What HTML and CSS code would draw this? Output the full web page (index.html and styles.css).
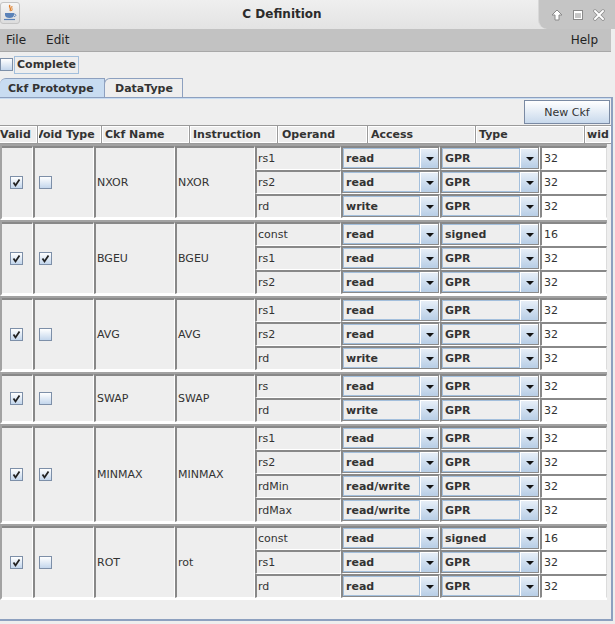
FILE: index.html
```html
<!DOCTYPE html>
<html>
<head>
<meta charset="utf-8">
<title>C Definition</title>
<link rel="stylesheet" href="styles.css">
</head>
<body>
<div class="window">
  <div class="titlebar">
    <div class="app-icon">
      <svg width="18" height="20" viewBox="0 0 18 20">
        <path d="M9 2 C7 4 11 5 9 8" fill="none" stroke="#e07a20" stroke-width="1.4"/>
        <path d="M11 3 C10 5 12 6 10.5 8" fill="none" stroke="#e07a20" stroke-width="1"/>
        <path d="M4 10 H13 V12 C13 14 11 15 8.5 15 C6 15 4 14 4 12 Z" fill="#5a82b8"/>
        <path d="M13 11 C15.5 11 15.5 13.5 13 13.5" fill="none" stroke="#5a82b8" stroke-width="1"/>
        <path d="M3 16.5 H14" stroke="#5a82b8" stroke-width="1.2"/>
      </svg>
    </div>
    <div class="title">C Definition</div>
    <div class="controls">
      <svg width="12" height="12" viewBox="0 0 12 12"><path d="M6 1 L11 6 H8 V11 H4 V6 H1 Z" fill="#fff" stroke="#8a8a8a" stroke-width="1"/></svg>
      <svg width="12" height="12" viewBox="0 0 12 12"><rect x="1.5" y="1.5" width="9" height="9" fill="none" stroke="#8a8a8a" stroke-width="1"/><rect x="2.5" y="2.5" width="7" height="7" fill="none" stroke="#fff" stroke-width="1"/><rect x="2.5" y="2.5" width="7" height="1.6" fill="#fff"/></svg>
      <svg width="12" height="12" viewBox="0 0 12 12"><path d="M2 2 L10 10 M10 2 L2 10" stroke="#8a8a8a" stroke-width="3.4" stroke-linecap="round"/><path d="M2 2 L10 10 M10 2 L2 10" stroke="#fff" stroke-width="2" stroke-linecap="round"/></svg>
    </div>
  </div>

  <div class="menubar">
    <span class="menu">File</span>
    <span class="menu">Edit</span>
    <span class="menu-spacer"></span>
    <span class="menu">Help</span>
  </div>

  <div class="main">
    <div class="complete-row">
      <span class="cb"></span>
      <span class="complete-label">Complete</span>
    </div>

    <div class="tabs">
      <div class="tab selected">Ckf Prototype</div>
      <div class="tab">DataType</div>
    </div>

    <div class="panel">
      <div class="toolbar"><button class="btn">New Ckf</button></div>

      <div class="thead">
        <div class="th h-valid">Valid</div>
        <div class="th h-void"><span class="clip">Void Type</span></div>
        <div class="th h-name">Ckf Name</div>
        <div class="th h-instr">Instruction</div>
        <div class="th h-op">Operand</div>
        <div class="th h-acc">Access</div>
        <div class="th h-type">Type</div>
        <div class="th h-wid">wid</div>
      </div>

      <div class="tbody">
        <!-- NXOR -->
        <div class="group">
          <div class="cell c-valid"><span class="cb on"><svg width="11" height="11" viewBox="0 0 11 11"><path d="M2.5 5.5 L4.5 8.5 L8.5 2.5" fill="none" stroke="#222" stroke-width="1.8"/></svg></span></div>
          <div class="cell c-void"><span class="cb"></span></div>
          <div class="cell c-name">NXOR</div>
          <div class="cell c-instr">NXOR</div>
          <div class="ops">
            <div class="op-row"><div class="sc c-op">rs1</div><div class="sc c-acc"><div class="combo"><span class="combo-val">read</span><span class="combo-btn"><i></i></span></div></div><div class="sc c-type"><div class="combo"><span class="combo-val">GPR</span><span class="combo-btn"><i></i></span></div></div><div class="sc c-wid">32</div></div>
            <div class="op-row"><div class="sc c-op">rs2</div><div class="sc c-acc"><div class="combo"><span class="combo-val">read</span><span class="combo-btn"><i></i></span></div></div><div class="sc c-type"><div class="combo"><span class="combo-val">GPR</span><span class="combo-btn"><i></i></span></div></div><div class="sc c-wid">32</div></div>
            <div class="op-row"><div class="sc c-op">rd</div><div class="sc c-acc"><div class="combo"><span class="combo-val">write</span><span class="combo-btn"><i></i></span></div></div><div class="sc c-type"><div class="combo"><span class="combo-val">GPR</span><span class="combo-btn"><i></i></span></div></div><div class="sc c-wid">32</div></div>
          </div>
        </div>
        <!-- BGEU -->
        <div class="group">
          <div class="cell c-valid"><span class="cb on"><svg width="11" height="11" viewBox="0 0 11 11"><path d="M2.5 5.5 L4.5 8.5 L8.5 2.5" fill="none" stroke="#222" stroke-width="1.8"/></svg></span></div>
          <div class="cell c-void"><span class="cb on"><svg width="11" height="11" viewBox="0 0 11 11"><path d="M2.5 5.5 L4.5 8.5 L8.5 2.5" fill="none" stroke="#222" stroke-width="1.8"/></svg></span></div>
          <div class="cell c-name">BGEU</div>
          <div class="cell c-instr">BGEU</div>
          <div class="ops">
            <div class="op-row"><div class="sc c-op">const</div><div class="sc c-acc"><div class="combo"><span class="combo-val">read</span><span class="combo-btn"><i></i></span></div></div><div class="sc c-type"><div class="combo"><span class="combo-val">signed</span><span class="combo-btn"><i></i></span></div></div><div class="sc c-wid">16</div></div>
            <div class="op-row"><div class="sc c-op">rs1</div><div class="sc c-acc"><div class="combo"><span class="combo-val">read</span><span class="combo-btn"><i></i></span></div></div><div class="sc c-type"><div class="combo"><span class="combo-val">GPR</span><span class="combo-btn"><i></i></span></div></div><div class="sc c-wid">32</div></div>
            <div class="op-row"><div class="sc c-op">rs2</div><div class="sc c-acc"><div class="combo"><span class="combo-val">read</span><span class="combo-btn"><i></i></span></div></div><div class="sc c-type"><div class="combo"><span class="combo-val">GPR</span><span class="combo-btn"><i></i></span></div></div><div class="sc c-wid">32</div></div>
          </div>
        </div>
        <!-- AVG -->
        <div class="group">
          <div class="cell c-valid"><span class="cb on"><svg width="11" height="11" viewBox="0 0 11 11"><path d="M2.5 5.5 L4.5 8.5 L8.5 2.5" fill="none" stroke="#222" stroke-width="1.8"/></svg></span></div>
          <div class="cell c-void"><span class="cb"></span></div>
          <div class="cell c-name">AVG</div>
          <div class="cell c-instr">AVG</div>
          <div class="ops">
            <div class="op-row"><div class="sc c-op">rs1</div><div class="sc c-acc"><div class="combo"><span class="combo-val">read</span><span class="combo-btn"><i></i></span></div></div><div class="sc c-type"><div class="combo"><span class="combo-val">GPR</span><span class="combo-btn"><i></i></span></div></div><div class="sc c-wid">32</div></div>
            <div class="op-row"><div class="sc c-op">rs2</div><div class="sc c-acc"><div class="combo"><span class="combo-val">read</span><span class="combo-btn"><i></i></span></div></div><div class="sc c-type"><div class="combo"><span class="combo-val">GPR</span><span class="combo-btn"><i></i></span></div></div><div class="sc c-wid">32</div></div>
            <div class="op-row"><div class="sc c-op">rd</div><div class="sc c-acc"><div class="combo"><span class="combo-val">write</span><span class="combo-btn"><i></i></span></div></div><div class="sc c-type"><div class="combo"><span class="combo-val">GPR</span><span class="combo-btn"><i></i></span></div></div><div class="sc c-wid">32</div></div>
          </div>
        </div>
        <!-- SWAP -->
        <div class="group">
          <div class="cell c-valid"><span class="cb on"><svg width="11" height="11" viewBox="0 0 11 11"><path d="M2.5 5.5 L4.5 8.5 L8.5 2.5" fill="none" stroke="#222" stroke-width="1.8"/></svg></span></div>
          <div class="cell c-void"><span class="cb"></span></div>
          <div class="cell c-name">SWAP</div>
          <div class="cell c-instr">SWAP</div>
          <div class="ops">
            <div class="op-row"><div class="sc c-op">rs</div><div class="sc c-acc"><div class="combo"><span class="combo-val">read</span><span class="combo-btn"><i></i></span></div></div><div class="sc c-type"><div class="combo"><span class="combo-val">GPR</span><span class="combo-btn"><i></i></span></div></div><div class="sc c-wid">32</div></div>
            <div class="op-row"><div class="sc c-op">rd</div><div class="sc c-acc"><div class="combo"><span class="combo-val">write</span><span class="combo-btn"><i></i></span></div></div><div class="sc c-type"><div class="combo"><span class="combo-val">GPR</span><span class="combo-btn"><i></i></span></div></div><div class="sc c-wid">32</div></div>
          </div>
        </div>
        <!-- MINMAX -->
        <div class="group">
          <div class="cell c-valid"><span class="cb on"><svg width="11" height="11" viewBox="0 0 11 11"><path d="M2.5 5.5 L4.5 8.5 L8.5 2.5" fill="none" stroke="#222" stroke-width="1.8"/></svg></span></div>
          <div class="cell c-void"><span class="cb on"><svg width="11" height="11" viewBox="0 0 11 11"><path d="M2.5 5.5 L4.5 8.5 L8.5 2.5" fill="none" stroke="#222" stroke-width="1.8"/></svg></span></div>
          <div class="cell c-name">MINMAX</div>
          <div class="cell c-instr">MINMAX</div>
          <div class="ops">
            <div class="op-row"><div class="sc c-op">rs1</div><div class="sc c-acc"><div class="combo"><span class="combo-val">read</span><span class="combo-btn"><i></i></span></div></div><div class="sc c-type"><div class="combo"><span class="combo-val">GPR</span><span class="combo-btn"><i></i></span></div></div><div class="sc c-wid">32</div></div>
            <div class="op-row"><div class="sc c-op">rs2</div><div class="sc c-acc"><div class="combo"><span class="combo-val">read</span><span class="combo-btn"><i></i></span></div></div><div class="sc c-type"><div class="combo"><span class="combo-val">GPR</span><span class="combo-btn"><i></i></span></div></div><div class="sc c-wid">32</div></div>
            <div class="op-row"><div class="sc c-op">rdMin</div><div class="sc c-acc"><div class="combo"><span class="combo-val">read/write</span><span class="combo-btn"><i></i></span></div></div><div class="sc c-type"><div class="combo"><span class="combo-val">GPR</span><span class="combo-btn"><i></i></span></div></div><div class="sc c-wid">32</div></div>
            <div class="op-row"><div class="sc c-op">rdMax</div><div class="sc c-acc"><div class="combo"><span class="combo-val">read/write</span><span class="combo-btn"><i></i></span></div></div><div class="sc c-type"><div class="combo"><span class="combo-val">GPR</span><span class="combo-btn"><i></i></span></div></div><div class="sc c-wid">32</div></div>
          </div>
        </div>
        <!-- ROT -->
        <div class="group">
          <div class="cell c-valid"><span class="cb on"><svg width="11" height="11" viewBox="0 0 11 11"><path d="M2.5 5.5 L4.5 8.5 L8.5 2.5" fill="none" stroke="#222" stroke-width="1.8"/></svg></span></div>
          <div class="cell c-void"><span class="cb"></span></div>
          <div class="cell c-name">ROT</div>
          <div class="cell c-instr">rot</div>
          <div class="ops">
            <div class="op-row"><div class="sc c-op">const</div><div class="sc c-acc"><div class="combo"><span class="combo-val">read</span><span class="combo-btn"><i></i></span></div></div><div class="sc c-type"><div class="combo"><span class="combo-val">signed</span><span class="combo-btn"><i></i></span></div></div><div class="sc c-wid">16</div></div>
            <div class="op-row"><div class="sc c-op">rs1</div><div class="sc c-acc"><div class="combo"><span class="combo-val">read</span><span class="combo-btn"><i></i></span></div></div><div class="sc c-type"><div class="combo"><span class="combo-val">GPR</span><span class="combo-btn"><i></i></span></div></div><div class="sc c-wid">32</div></div>
            <div class="op-row"><div class="sc c-op">rd</div><div class="sc c-acc"><div class="combo"><span class="combo-val">read</span><span class="combo-btn"><i></i></span></div></div><div class="sc c-type"><div class="combo"><span class="combo-val">GPR</span><span class="combo-btn"><i></i></span></div></div><div class="sc c-wid">32</div></div>
          </div>
        </div>
      </div>
    </div>
  </div>
</div>
</body>
</html>
```

FILE: styles.css
```css
* { box-sizing: border-box; }
html, body { margin: 0; padding: 0; }
body {
  width: 615px;
  height: 624px;
  overflow: hidden;
  background: #eeeeee;
  font-family: "DejaVu Sans", "Liberation Sans", sans-serif;
  font-size: 11px;
  color: #333333;
}
.window {
  width: 615px;
  height: 624px;
  display: flex;
  flex-direction: column;
}

/* title bar */
.titlebar {
  height: 29px;
  flex: none;
  display: flex;
  align-items: stretch;
  background: linear-gradient(#efefef, #e3e3e3);
}
.app-icon {
  width: 20px;
  height: 22px;
  margin-top: 2px;
  border: 1px solid #c4c4c4;
  border-radius: 3px;
  background: linear-gradient(#f6f6f6, #dcdcdc);
  display: flex;
  align-items: center;
  justify-content: center;
}
.title {
  flex: 1;
  text-align: center;
  font-weight: bold;
  font-size: 12px;
  color: #2b2b2b;
  line-height: 29px;
  padding-left: 6px;
}
.controls {
  width: 77px;
  display: flex;
  align-items: center;
  justify-content: space-around;
  padding: 0 6px 0 8px;
  background: #c5c5c5;
  border-left: 1px solid #d8d8d8;
  border-bottom-left-radius: 9px;
}

/* menu bar */
.menubar {
  height: 23px;
  flex: none;
  display: flex;
  align-items: center;
  background: #c2c2c2;
  border-bottom: 1px solid #a8a8a8;
  margin-right: 4px;
  font-size: 12px;
  color: #222;
}
.menu { padding: 0 6px; }
.menu + .menu { margin-left: 8px; }
.menu-spacer { flex: 1; }
.menubar .menu:last-child { padding-right: 13px; }

.main {
  flex: 1;
  display: flex;
  flex-direction: column;
  margin-right: 2px;
}

/* complete */
.complete-row {
  height: 25px;
  flex: none;
  display: flex;
  align-items: center;
  gap: 1px;
}
.complete-label {
  font-weight: bold;
  border: 1px solid #a3bfdc;
  padding: 1px 2px;
  line-height: 14px;
}

/* checkbox */
.cb {
  width: 13px;
  height: 13px;
  display: inline-flex;
  align-items: center;
  justify-content: center;
  border: 1px solid #7d8fa8;
  background: linear-gradient(#ffffff, #c3d6ec);
  flex: none;
}
.cb svg { display: block; }

/* tabs */
.tabs {
  height: 19px;
  flex: none;
  margin-top: 1px;
  display: flex;
  align-items: flex-end;
}
.tab {
  height: 19px;
  padding: 0 9px 0 10px;
  display: flex;
  align-items: center;
  font-weight: bold;
  border: 1px solid #8da0bf;
  border-bottom: none;
  border-top-left-radius: 6px;
  background: #eeeeee;
}
.tab.selected {
  width: 105px;
  padding-left: 8px;
  background: #c8dcf1;
  border-left: none;
}
.tab + .tab { width: 79px; padding-left: 10px; margin-left: -1px; }

/* panel */
.panel {
  flex: 1;
  display: flex;
  flex-direction: column;
  border-top: 1px solid #8da0bf;
  box-shadow: inset 0 1px 0 #c8dcf1;
  border-right: 2px solid #8da0bf;
  border-bottom: 2px solid #8da0bf;
  margin-bottom: 3px;
}
.toolbar {
  display: flex;
  justify-content: flex-end;
  padding: 2px 1px 1px 0;
}
.btn {
  width: 86px;
  height: 24px;
  font-family: inherit;
  font-size: 11px;
  color: #333;
  border: 1px solid #7a8aa3;
  background: linear-gradient(#ffffff, #c8d9ec);
  padding: 0;
}

/* table header */
.thead {
  height: 19px;
  display: flex;
  gap: 1px;
  padding: 1px 0;
  background: #9a9a9a;
}
.th {
  flex: none;
  font-weight: bold;
  line-height: 15px;
  padding-left: 1px;
  overflow: hidden;
  white-space: nowrap;
  background: #eeeeee;
  border: 1px solid #ffffff;
}
.h-valid { width: 37px; padding-left: 0; border-left: none; }
.h-void { width: 63px; padding-left: 0; }
.h-void .clip { display: inline-block; margin-left: -4px; }
.h-name { width: 87px; padding-left: 2px; }
.h-instr { width: 87px; padding-left: 2px; }
.h-op { width: 89px; padding-left: 3px; }
.h-acc { width: 107px; padding-left: 2px; }
.h-type { width: 108px; padding-left: 2px; }
.h-wid { flex: 1; }

/* table body */
.tbody {
  display: flex;
  flex-direction: column;
}
.group {
  display: flex;
  width: 607px;
  border-top: 2px solid #a2a2a2;
  border-left: 2px solid #a2a2a2;
  border-bottom: 2px solid #ffffff;
}
.cell, .sc {
  flex: none;
  display: flex;
  align-items: center;
  border-left: 2px solid #888888;
  border-top: 2px solid #888888;
  border-right: 1px solid #ffffff;
  border-bottom: 1px solid #ffffff;
  color: #333;
  white-space: nowrap;
  overflow: hidden;
}
.c-valid { width: 31px; justify-content: center; border-left: none; padding-right: 1px; }
.c-void { width: 61px; padding-left: 4px; }
.c-name { width: 81px; padding-left: 1px; }
.c-instr { width: 80px; padding-left: 1px; }
.ops { display: flex; flex-direction: column; }
.op-row { display: flex; height: 24px; }
.c-op { width: 86px; padding-left: 1px; }
.c-acc { width: 99px; }
.c-type { width: 100px; }
.c-wid { width: 67px; background: #ffffff; padding-left: 2px; border-right: 1px solid #dcdcdc; }

/* combo */
.combo {
  flex: 1;
  height: 100%;
  display: flex;
  border-right: 1px solid #8a8a8a;
  border-bottom: 1px solid #8a8a8a;
}
.combo-val {
  flex: 1;
  display: flex;
  align-items: center;
  padding-left: 2px;
  font-weight: bold;
  background: #eeeeee;
  border: 1px solid #a3bfdc;
}
.combo-btn {
  width: 18px;
  display: flex;
  align-items: center;
  justify-content: center;
  background: linear-gradient(#e6eef7, #b8cee6);
  border-top: 1px solid #ffffff;
  border-left: 1px solid #ffffff;
}
.combo-btn i {
  width: 0;
  height: 0;
  border-left: 4px solid transparent;
  border-right: 4px solid transparent;
  border-top: 4px solid #111;
}
```
